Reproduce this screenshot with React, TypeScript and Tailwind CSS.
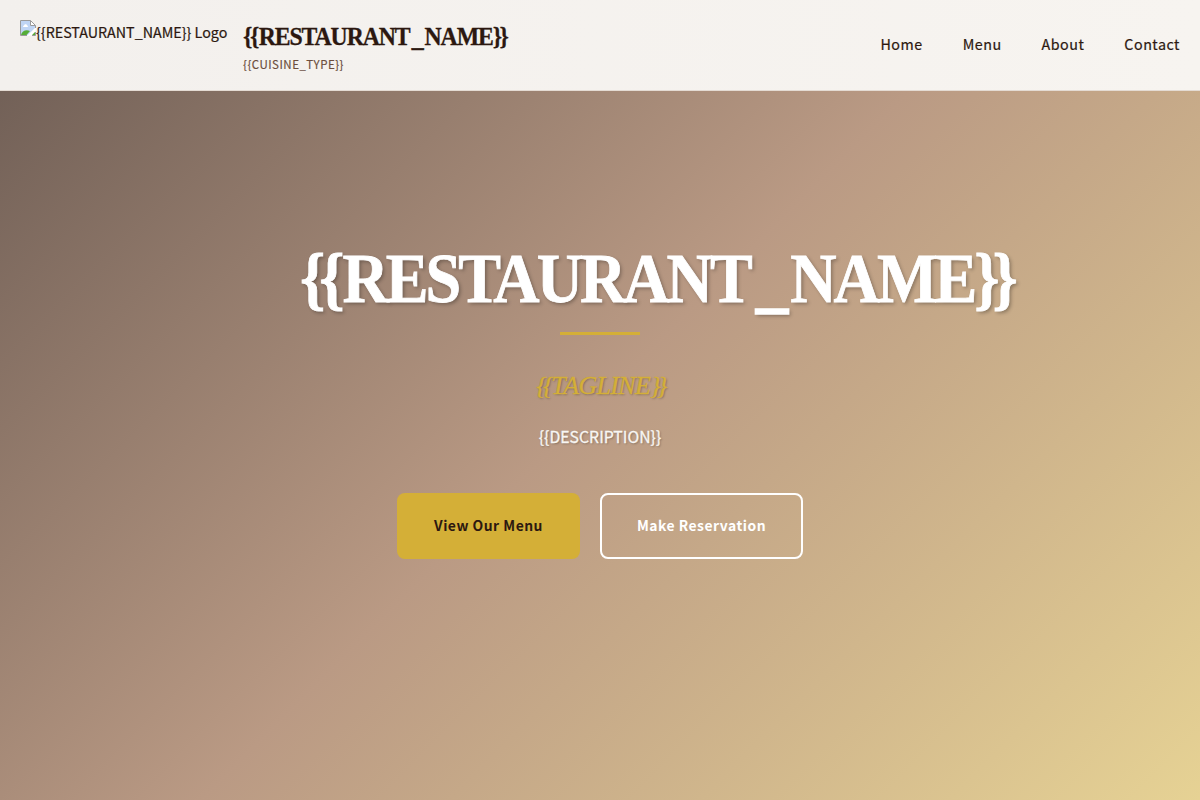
const sans = "font-['Noto_Sans_CJK_JP',sans-serif]";
const serif = "font-['Liberation_Serif',serif]";

function MissingImageIcon() {
  return (
    <svg width="16" height="16" viewBox="0 0 16 16" className="shrink-0">
      <path d="M.5 .5h10l5 5v10H.5z" fill="#fff" />
      <path d="M1 1h9.500v5H15v2.500L8 15H1z" fill="#bfd5f5" />
      <path d="M3 6.500c0-1 1-1 1-1 .5-2 3-1.500 3 0 1.500 0 1.500 1.500 0 1.500H3.500z" fill="#fff" />
      <path d="M1 15c1-4 5-6 9-4l-3.500 4zM12 15l3-3v3z" fill="#55ad36" />
      <path d="M16 8 8.500 15.500" stroke="#fff" strokeWidth="1.500" />
      <path d="M7 15.500H.5V.5h10l5 5V8M10.500 .5v5h5M15.500 12v3.500H12" fill="none" stroke="#9a9a9a" />
    </svg>
  );
}

function Wordmark() {
  return (
    <>
      <span className="tracking-[-0.096em]">{"{"}</span>
      <span className="tracking-[-0.03em]">{"{"}</span>
      <span>RESTAURAN</span>
      <span className="tracking-[0.05em]">T</span>
      <span className="relative top-[0.03em] tracking-[0.035em] [-webkit-text-stroke:0.025em]">_</span>
      <span>NAME</span>
      <span className="tracking-[-0.11em]">{"}}"}</span>
    </>
  );
}

export default function App() {
  return (
    <div className={`${sans} flex h-[800px] w-full flex-col overflow-hidden bg-[linear-gradient(135deg,#6b5b53_0%,#ba9a84_50%,#e6d294_100%)] text-[#2c1810]`}>
      <header className="flex h-[91px] shrink-0 items-center justify-between border-b border-[#e4dbd3] bg-[linear-gradient(90deg,#f3f0ed,#f7f4f0)] px-5">
        <div className="flex h-[50px] gap-[15px]">
          <div className="flex h-[26px] w-[208px] items-start">
            <MissingImageIcon />
            <span className="whitespace-nowrap text-[14.300px] leading-[23px] [-webkit-text-stroke:0.2px]">{"{{RESTAURANT_NAME}} Logo"}</span>
          </div>
          <div className="flex flex-col">
            <h1 className={`${serif} h-8 w-[280px] origin-left scale-x-[0.925] whitespace-nowrap text-[25.700px] font-bold leading-[33px] tracking-[-0.047em] [-webkit-text-stroke:0.3px]`}><Wordmark /></h1>
            <p className="mt-[3px] whitespace-nowrap text-[11.500px] leading-[18px] tracking-[0.5px] text-[#6b4e3d] [-webkit-text-stroke:0.15px]">{"{{CUISINE_TYPE}}"}</p>
          </div>
        </div>
        <nav className="flex gap-10 pb-0.5 text-[14.300px] tracking-[0.5px] [-webkit-text-stroke:0.2px]">
          <a>Home</a>
          <a>Menu</a>
          <a>About</a>
          <a>Contact</a>
        </nav>
      </header>
      <main className="flex flex-col items-center pt-[147px]">
        <h2 className={`${serif} h-20 w-[600px] origin-left scale-x-[0.93] whitespace-nowrap text-[69px] font-bold leading-[82px] tracking-[-0.047em] text-white [-webkit-text-stroke:0.8px] [text-shadow:2px_2px_4px_rgba(0,0,0,0.3)]`}><Wordmark /></h2>
        <div className="mt-[14px] h-[3px] w-20 bg-[#d4af37]" />
        <p className={`${serif} mt-[33px] h-9 whitespace-nowrap text-[26px] italic leading-9 tracking-[-0.025em] text-[#d4af37] [-webkit-text-stroke:0.3px] [text-shadow:1px_1px_2px_rgba(0,0,0,0.3)]`}>
          <span className="tracking-[-0.14em]">{"{"}</span><span className="tracking-[-0.08em]">{"{"}</span>TAGLINE<span className="tracking-[-0.14em]">{"}}"}</span>
        </p>
        <p className="mt-[17px] h-8 whitespace-nowrap text-[15.800px] leading-8 text-[#f8f6f3] [-webkit-text-stroke:0.3px] [text-shadow:1px_1px_2px_rgba(0,0,0,0.3)]">{"{{DESCRIPTION}}"}</p>
        <div className="mt-10 flex gap-5 text-[13.900px] font-bold tracking-[0.5px]">
          <button className="h-[66px] w-[183px] rounded-lg bg-[#d4af37] pb-0.5">View Our Menu</button>
          <button className="h-[66px] w-[203px] rounded-lg border-2 border-white pb-0.5 text-white">Make Reservation</button>
        </div>
      </main>
    </div>
  );
}
